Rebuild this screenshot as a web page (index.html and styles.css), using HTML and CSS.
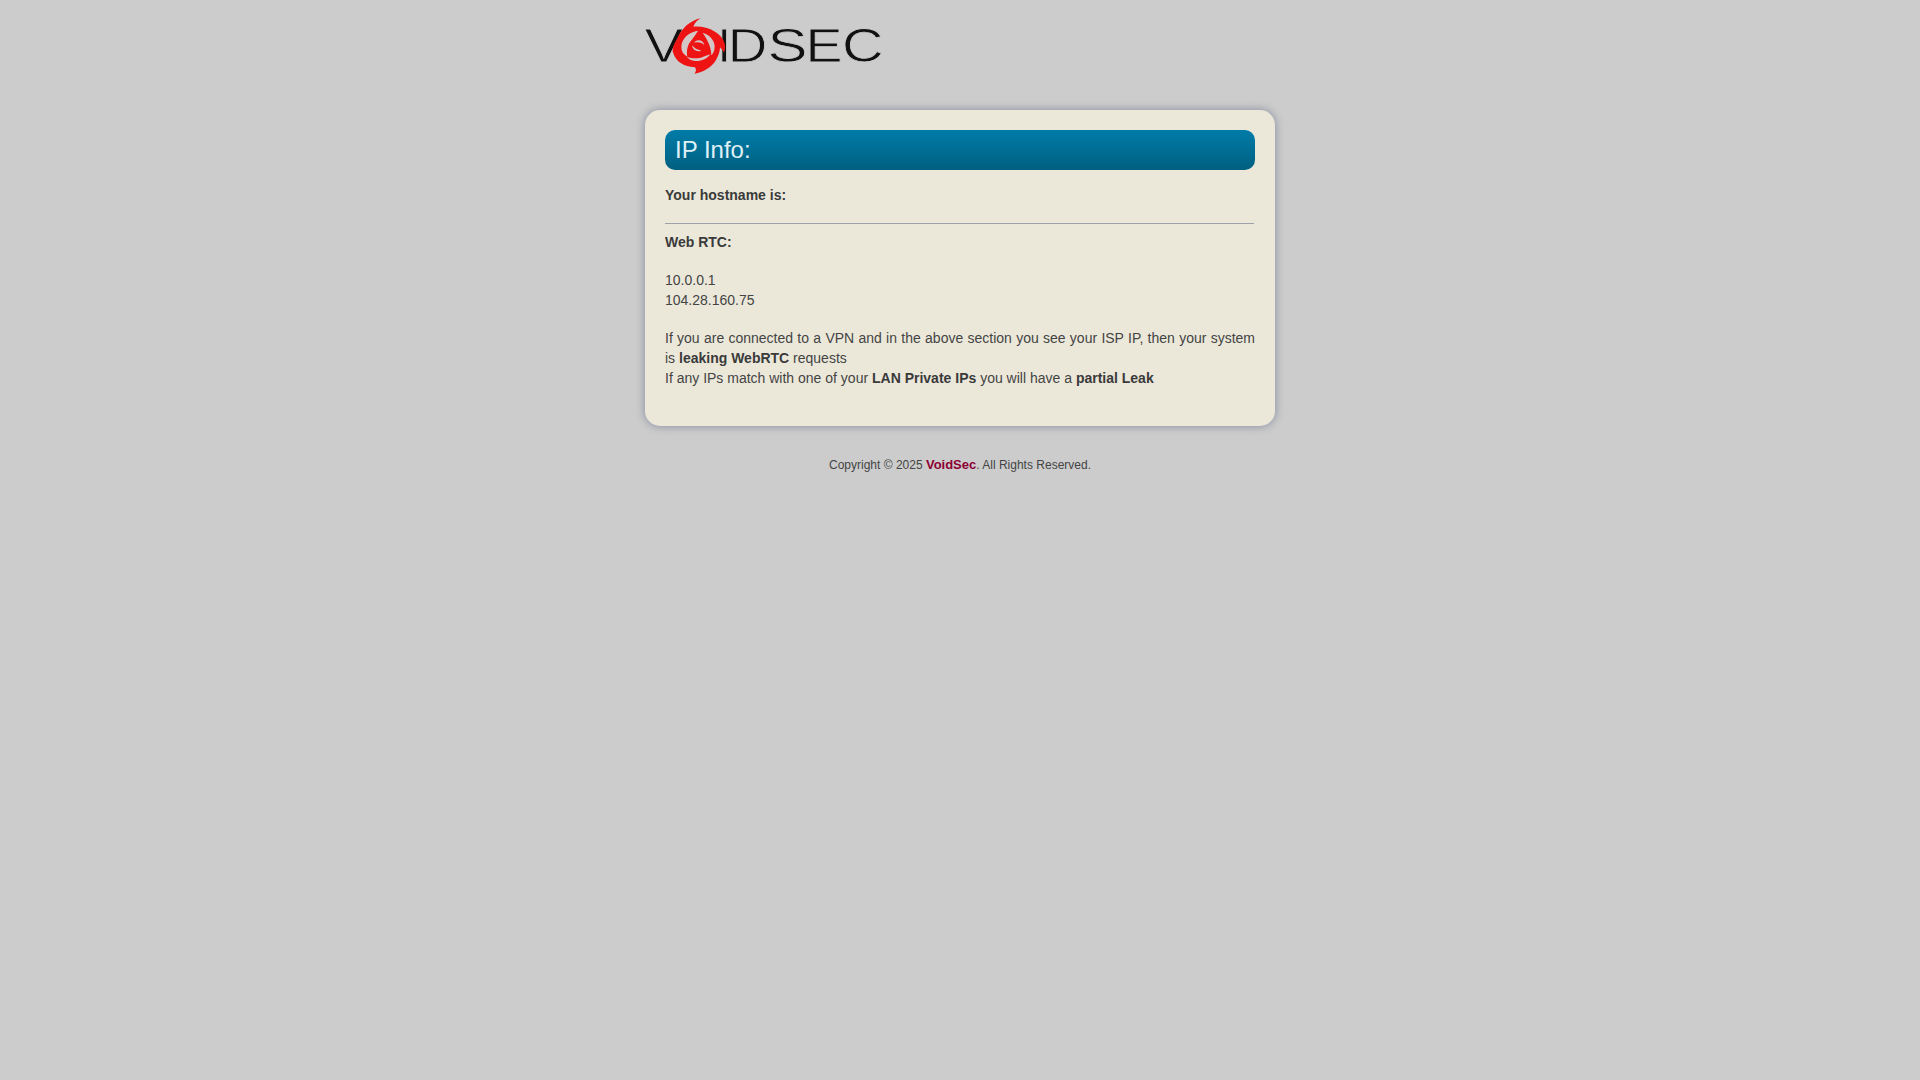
FILE: index.html
```html
<!DOCTYPE html>
<html lang="en">
<head>
<meta charset="utf-8">
<title>IP Info</title>
<link rel="stylesheet" href="styles.css">
</head>
<body>
<div class="page">
  <header class="logo">
    <svg class="logo-svg" width="240" height="60" viewBox="0 0 240 60" aria-label="VoidSec">
      <text class="logo-text" x="-0.4" y="47.4" textLength="38.6" lengthAdjust="spacingAndGlyphs">V</text>
      <text class="logo-text" x="72.5" y="47.4" textLength="13.3" lengthAdjust="spacingAndGlyphs">I</text>
      <text class="logo-text" x="82.7" y="47.4" textLength="39.5" lengthAdjust="spacingAndGlyphs">D</text>
      <text class="logo-text" x="122.5" y="47.4" textLength="40" lengthAdjust="spacingAndGlyphs">S</text>
      <text class="logo-text" x="160.6" y="47.4" textLength="37" lengthAdjust="spacingAndGlyphs">E</text>
      <text class="logo-text" x="197" y="47.4" textLength="41.6" lengthAdjust="spacingAndGlyphs">C</text>
      <g transform="translate(-5 -5) scale(0.3333)">
        <path class="swirl-red" d="M182 25 C150 32 125 55 112 85 C100 105 95 120 100 130 C108 155 130 170 165 172 C170 180 168 185 163 191 C190 187 215 172 228 150 C235 138 240 125 240 112 C245 118 250 122 252 128 C262 105 250 80 225 65 C205 52 180 48 160 50 C165 38 172 30 182 25 Z"/>
        <path class="swirl-gap" d="M174 62 C146 66 124 86 124 112 C124 124 130 134 142 140 C139 124 142 106 152 94 C158 86 166 76 174 62 Z"/>
        <path class="swirl-gap" d="M188 68 C208 74 224 90 224 110 C224 120 221 128 214 136 C214 116 206 94 188 68 Z"/>
        <path class="swirl-gap" d="M212 132 C202 146 184 154 166 153 C154 152 146 147 140 140 C158 146 176 146 190 140 C198 137 206 135 212 132 Z"/>
        <path class="swirl-gap" d="M162 98 C172 86 190 90 193 106 C187 98 176 95 162 98 Z"/>
        <path class="swirl-gap" d="M184 122 C172 127 158 121 156 106 C162 114 172 120 184 122 Z"/>
      </g>
    </svg>
  </header>
  <main class="panel">
    <h1 class="panel-title">IP Info:</h1>
    <p class="line"><strong>Your hostname is:</strong></p>
    <hr class="rule">
    <p class="line"><strong>Web RTC:</strong></p>
    <p class="line">10.0.0.1<br>104.28.160.75</p>
    <p class="line justified">If you are connected to a VPN and in the above section you see your ISP IP, then your system is <strong>leaking WebRTC</strong> requests<br>If any IPs match with one of your <strong>LAN Private IPs</strong> you will have a <strong>partial Leak</strong></p>
  </main>
  <footer class="foot">Copyright © 2025 <a class="foot-link" href="#">VoidSec</a>. All Rights Reserved.</footer>
</div>
</body>
</html>
```

FILE: styles.css
```css
* { box-sizing: border-box; }
html, body { margin: 0; padding: 0; height: 100%; }
body {
  background: #cccccc;
  color: #444444;
  font-family: "Liberation Sans", Arial, sans-serif;
  font-size: 14px;
  line-height: 20px;
}
strong { color: #3a3a3a; }
.page { width: 630px; margin: 0 auto; }
.logo { height: 110px; padding-top: 15px; }
.logo-svg { display: block; }
.logo-text {
  font-family: "Liberation Sans", Arial, sans-serif;
  font-size: 49px;
  fill: #111111;
  stroke: #cccccc;
  stroke-width: 0.8px;
}
.swirl-red { fill: #ee1414; }
.swirl-gap { fill: #d4c8c6; }
.panel {
  background: #ebe8da;
  border-radius: 15px;
  box-shadow: 0 0 10px #848a9c;
  padding: 20px 20px 38px;
}
.panel-title {
  margin: 0 0 15px;
  height: 40px;
  padding-left: 10px;
  border-radius: 10px;
  background: linear-gradient(to bottom, #007ca8, #005f80);
  color: #dff0f6;
  font-size: 24px;
  font-weight: normal;
  line-height: 40px;
}
.line { margin: 0 0 18px; }
.line:last-child { margin-bottom: 0; }
.justified { text-align: justify; }
.rule {
  border: 0;
  border-top: 1px solid #a0a0a8;
  height: 0;
  margin: 18px 1px 8px 0;
}
.foot {
  margin-top: 31px;
  text-align: center;
  font-size: 12px;
  line-height: 16px;
}
.foot-link { color: #8c0034; font-size: 13px; font-weight: bold; text-decoration: none; }
```
